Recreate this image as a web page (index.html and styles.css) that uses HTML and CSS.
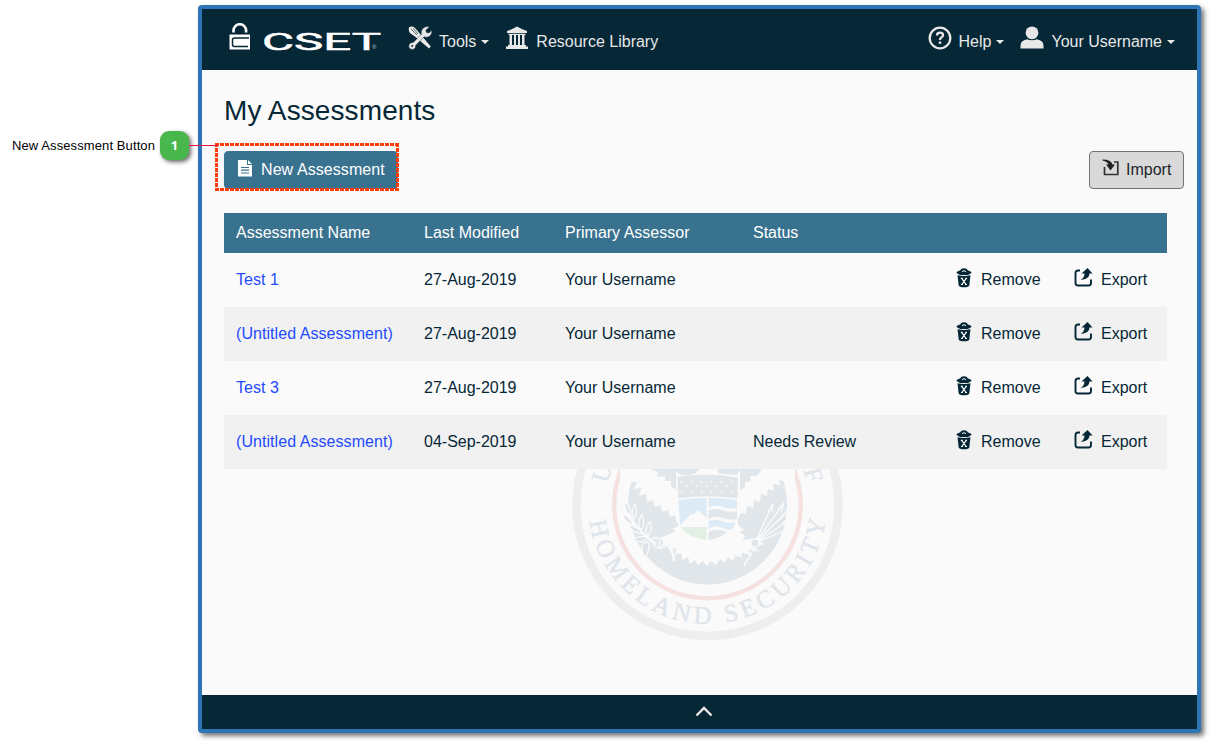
FILE: index.html
```html
<!DOCTYPE html>
<html lang="en">
<head>
<meta charset="utf-8">
<title>CSET - My Assessments</title>
<link rel="stylesheet" href="styles.css">
</head>
<body>
<svg class="defs" width="0" height="0" aria-hidden="true">
  <symbol id="trash" viewBox="0 0 16 20">
    <path d="M.5 5Q.5 3.200 4 2.500Q5 .3 8 .3T12 2.500Q15.500 3.200 15.500 5L12 7H4Z" fill="#052736"/>
    <path d="M6 3.600Q8 1.800 10 3.600" fill="none" stroke="#fafafa" stroke-width="1"/>
    <path d="M1.500 7.200Q8 8.800 14.500 7.200L13.300 17.500Q12.900 19.300 8 19.300T2.700 17.500Z" fill="#052736"/>
    <path d="M5.700 10.300L10 16.500M10.300 10.300L5.700 16.500M4.800 10.300H6.800M9.300 10.300H11M5 16.500H6.800M9 16.500H11" fill="none" stroke="#fff" stroke-width="1.200"/>
  </symbol>
  <symbol id="export" viewBox="0 0 19 19">
    <path d="M6 2.500H4Q1.500 2.500 1.500 5V15Q1.500 17.500 4 17.500H14.500Q17 17.500 17 15V11.500" fill="none" stroke="#052736" stroke-width="1.900"/>
    <path d="M13.500 0L18.500 5.500H15.500Q15.500 11 6.500 12Q10.500 9.500 10.500 5.500H7.500Z" fill="#052736"/>
  </symbol>
</svg>
<main class="page">
  <aside class="callout"><span>New Assessment Button</span><b class="badge">1</b><i class="lead"></i></aside>
  <section class="window">
    <header class="navbar">
      <svg class="lock" width="22" height="28" viewBox="0 0 22 28">
        <path d="M4.500 9.500V7.500A6.300 6.300 0 0 1 17.100 7.500V9.500" fill="none" stroke="#fff" stroke-width="2.600"/>
        <path d="M.5 11.500H21V26.500H.5Z" fill="#fff"/>
        <path d="M20 15H5.500Q3.500 15 3.500 17V21.500Q3.500 23.500 5.500 23.500H19" fill="none" stroke="#052736" stroke-width="1.500"/>
      </svg>
      <svg class="wordmark" width="120" height="30" viewBox="0 0 120 30">
        <text x="-1" y="19" class="wm" textLength="119" lengthAdjust="spacingAndGlyphs">CSET</text>
        <text x="109" y="18" class="reg">®</text>
      </svg>
      <a class="nav tools">
        <svg width="24" height="24" viewBox="0 0 24 24">
          <path d="M1 1.500Q4-.5 7 2L10.500 6 22.800 20.500 21 22.500 7.500 11 2.500 7.500Q0 5 1 1.500Z" fill="#e8e8e8"/>
          <path d="M3 3L9 9M5 2L10 8" stroke="#052736" stroke-width=".6"/>
          <path d="M21.500 .8L17.800 4.200 18.500 6.500 21 7 23.500 4.300Q24.500 9 20.500 10.700 18 11.700 16 10.800L7.500 19.500Q8.200 22 5.500 23.200 2.500 24 1 21.500 0 18.300 3 16.800 4 16.400 5 16.700L13.500 8.200Q12.500 5 15 2.300 18-.3 21.500 .8Z" fill="#e8e8e8" stroke="#052736" stroke-width=".4"/>
          <circle cx="4.200" cy="20" r=".9" fill="#052736"/>
        </svg><span>Tools</span><i class="caret"></i></a>
      <a class="nav library">
        <svg width="24" height="24" viewBox="0 0 24 24" fill="#e8e8e8"><path d="M12 .5Q17 3.500 22 5V7H2V5Q7 3.500 12 .5ZM3.500 7.800H20.500V9H3.500ZM4.500 9H7V19H4.500ZM9 9H11V19H9ZM13 9H15V19H13ZM17 9H19.500V19H17ZM3 19H21V20.500H3ZM1 20.500H23V23H1Z"/></svg><span>Resource Library</span></a>
      <a class="nav help">
        <svg width="24" height="24" viewBox="0 0 24 24" fill="none" stroke="#e8e8e8"><circle cx="12" cy="12" r="10.300" stroke-width="2.300"/><path d="M9 9.500Q9 6.700 12 6.700T15 9.200Q15 10.600 13.300 11.500Q12 12.300 12 14" stroke-width="2.300"/><path d="M12 15.500V17.800" stroke-width="2.500"/></svg><span>Help</span><i class="caret"></i></a>
      <a class="nav user">
        <svg width="24" height="24" viewBox="0 0 24 24" fill="#e8e8e8"><circle cx="12" cy="6.800" r="6.400"/><path d="M.5 22.500V19.500Q.5 14.500 7 13.200Q12 15.500 17 13.200Q23.500 14.500 23.500 19.500V22.500Z"/></svg><span>Your Username</span><i class="caret"></i></a>
    </header>
    <div class="content">
      <svg class="seal" width="272" height="272" viewBox="572 369 272 272">
        <defs>
          <path id="arcBottom" d="M589.700 521.600A119 119 0 0 0 825.300 521.600"/>
          <pattern id="stars" width="10" height="10" patternUnits="userSpaceOnUse" patternTransform="translate(679 479)"><circle cx="2.500" cy="2.500" r="1" fill="#fafafa"/><circle cx="7.500" cy="7" r="1" fill="#fafafa"/></pattern>
        </defs>
        <circle cx="707.500" cy="505" r="131" fill="none" stroke="#eee" stroke-width="8.500"/>
        <circle cx="707.500" cy="505" r="93.300" fill="none" stroke="#f6e1e1" stroke-width="4.300"/>
        <text class="sealtext" text-anchor="middle" transform="translate(610 475) rotate(-73)">U</text>
        <text class="sealtext" text-anchor="middle" transform="translate(805.500 477) rotate(74)">F</text>
        <text class="sealtext"><textPath href="#arcBottom" textLength="341">HOMELAND SECURITY</textPath></text>
        <circle cx="707.500" cy="505" r="79.500" fill="#e1e6ea"/>
        <path fill="#fafafa" d="M620 440H795V480L784 481 779 480 780 486 773 483 774 491 768 489 767 496 761 494 760 502 754 500 753 508 747 506 746 514 741 513 738 519 738 525 744 530 739 532 746 536 742 540 749 539 758 539 764 544 755 547 760 552 748 549 752 556 741 552 742 558 735 554 733 561 728 557 725 563 720 559 716 565 711 561 707 566 703 561 698 565 695 560 690 564 688 557 682 560 681 553 675 555 676 548 669 551 670 544 662 546 664 540 660 538 667 535 676 531 672 529 679 526 676 520 675 515 670 517 668 510 662 512 661 505 655 507 653 500 647 502 646 494 639 496 641 488 634 489 637 482 630 482 620 482Z"/>
        <path fill="#e1e6ea" d="M650 469L676 469V490L671 486V481L665 481V476L657 477 658 472ZM740 469H762L757 476 750 476 751 481 745 482V487L740 490Z"/>
        <path fill="#e1e6ea" d="M671 468H700L696 473 689 475Q679 476 676 471ZM718 468H741L737 475Q723 474 718 473Z"/>
        <path fill="#e1e6ea" d="M677.500 477Q708 472 738 477.500L737.500 498.500Q708 494 678 498.500Z"/>
        <path fill="url(#stars)" d="M679 479Q708 475 736 479V495Q708 492 679 495Z"/>
        <path fill="#dcebf5" d="M678.500 500Q692 498 706.500 498V518L698 510 694 514 691 514 680 525Z"/>
        <path fill="#e1efe4" d="M680 527H706.500V540Q689 538 680 527Z"/>
        <path fill="#dcebf5" d="M708.500 498Q724 498 737 500V508Q730 510 723 507T708.500 508Z"/>
        <path fill="#e1e6ea" d="M708.500 510Q716 508 723 510.500T737 511V519Q730 521 723 518T708.500 519Z"/>
        <path fill="#dcebf5" d="M708.500 521Q716 519 723 521.500T736 522Q734 527 731 530Q726 529 720 527T708.500 529Z"/>
        <path fill="#e1e6ea" d="M708.500 532Q716 528 727 532Q720 538 708.500 540Z"/>
        <g fill="none" stroke="#fafafa" stroke-width="1.300">
          <path d="M626 505Q631 527 656 544M664 541Q674 550 674 561" stroke-width="2.500"/>
          <path d="M625 502Q624 510 630 516Q632 508 625 502ZM635 504Q630 511 634 519Q638 512 635 504ZM622 514Q625 523 634 525Q630 516 622 514ZM628 526Q634 534 642 533Q637 525 628 526ZM642 515Q636 523 641 530Q646 523 642 515ZM650 522Q643 529 648 536Q653 530 650 522ZM633 540Q642 544 648 538Q641 534 633 540ZM643 543Q640 552 645 557Q651 549 648 542Z" fill="#dee4e9"/>
          <path d="M653 538Q650 545 658 548Q665 546 664 540Q658 537 653 538M660 540Q656 553 668 545"/>
          <path d="M755 543L772 505M755 543L781 507M755 543L785 514M755 543L788 521M755 543L788 529M753 546L731 559M755 547L744 566M751 545L730 554"/>
          <path d="M768 512L773 504 772 512M778 510L784 503 781 512M781 517L791 507 786 516M782 524L794 513 787 525M781 533L793 524 785 534M730 553L743 549M744 565L752 553"/>
          <circle cx="755" cy="543" r="4" fill="#e1e6ea"/>
        </g>
      </svg>
      <h1>My Assessments</h1>
      <div class="actions">
        <button class="btn primary"><svg width="14" height="17" viewBox="0 0 14 17"><path d="M0 0H9V5H14V16.500H0ZM10 0L14 4H10Z" fill="#fff"/><path d="M3 7.500H11M3 10.200H11M3 13H11" stroke="#39728f" stroke-width="1.200"/></svg><span>New Assessment</span><i class="highlight"></i></button>
        <button class="btn import"><svg width="18" height="17" viewBox="0 0 18 17"><path d="M2.500 8V15.500H15.800V3H12" fill="none" stroke="#333" stroke-width="1.700"/><path d="M.5 .5Q9 .5 10.500 5.500H13L8.500 11.500 4 5.500H6.500Q5.500 2.500 .5 1.500Z" fill="#222"/></svg><span>Import</span></button>
      </div>
      <div class="table">
        <div class="row head"><span>Assessment Name</span><span>Last Modified</span><span>Primary Assessor</span><span>Status</span></div>
        <div class="row"><a>Test 1</a><span>27-Aug-2019</span><span>Your Username</span><span></span><span class="act"><svg class="trash"><use href="#trash"/></svg>Remove</span><span class="act"><svg class="export"><use href="#export"/></svg>Export</span></div>
        <div class="row alt"><a>(Untitled Assessment)</a><span>27-Aug-2019</span><span>Your Username</span><span></span><span class="act"><svg class="trash"><use href="#trash"/></svg>Remove</span><span class="act"><svg class="export"><use href="#export"/></svg>Export</span></div>
        <div class="row"><a>Test 3</a><span>27-Aug-2019</span><span>Your Username</span><span></span><span class="act"><svg class="trash"><use href="#trash"/></svg>Remove</span><span class="act"><svg class="export"><use href="#export"/></svg>Export</span></div>
        <div class="row alt"><a>(Untitled Assessment)</a><span>04-Sep-2019</span><span>Your Username</span><span>Needs Review</span><span class="act"><svg class="trash"><use href="#trash"/></svg>Remove</span><span class="act"><svg class="export"><use href="#export"/></svg>Export</span></div>
      </div>
    </div>
    <footer class="footer"><svg width="18" height="11" viewBox="0 0 18 11"><path d="M1.500 9.500L9 2L16.500 9.500" fill="none" stroke="#f0ede8" stroke-width="2.400"/></svg></footer>
  </section>
</main>
</body>
</html>
```

FILE: styles.css
```css
* { box-sizing: border-box; }
body { margin: 0; background: #fff; font: 16px/24px "Liberation Sans", Arial, sans-serif; color: #052736; }
.defs { position: absolute; }
.page { display: flex; height: 742px; overflow: hidden; }
.callout { display: flex; align-items: flex-start; justify-content: flex-end; position: relative; width: 198px; height: 30px; margin-top: 131px; padding-right: 9px; font-size: 13px; line-height: 29px; letter-spacing: .1px; color: #000; gap: 5px; white-space: nowrap; }
.badge { width: 29px; height: 29px; border-radius: 9px; background: #48b84c; color: #fff; font: bold 13px/29px "Open Sans", sans-serif; text-align: center; box-shadow: 2px 2px 4px rgba(0,0,0,.6); }
.lead { position: absolute; z-index: 2; left: 189px; top: 14px; width: 29px; height: 1px; background: #f0103c; }
.window { display: flex; flex-direction: column; width: 1003px; height: 728px; margin-top: 5px; border: 4px solid #2e75b6; border-radius: 4px; background: #fafafa; box-shadow: 3px 3px 5px rgba(0,0,0,.55); }
.navbar { display: flex; align-items: flex-start; height: 61px; padding: 14px 22px 0 27px; background: #052736; color: #e8e8e8; }
.wordmark { margin: 8px 0 0 12px; overflow: visible; }
.wm { font: 23px Roboto, sans-serif; fill: #fff; stroke: #fff; stroke-width: .5; }
.reg { font: 6px "Liberation Sans", sans-serif; fill: #ccc; }
.nav { display: flex; align-items: flex-start; white-space: nowrap; }
.nav svg { margin-top: 3px; }
.nav span { margin: 7px 0 0 7px; }
.caret { margin: 17px 0 0 5px; border: 4px solid transparent; border-top-color: #e8e8e8; border-bottom: 0; }
.tools { margin-left: 25px; }
.library { margin-left: 16px; }
.help { margin-left: auto; }
.user { margin-left: 16px; }
.content { position: relative; flex: 1; padding: 24px 13px 0 22px; }
.seal { position: absolute; left: 370px; top: 299px; }
.sealtext { font: 25px "Liberation Serif", serif; fill: #dfe5ea; stroke: #dfe5ea; stroke-width: .4; }
h1 { margin: 0; font-size: 28px; font-weight: 400; line-height: 34px; letter-spacing: .1px; }
.actions { display: flex; justify-content: space-between; margin-top: 23px; }
.btn { display: flex; position: relative; height: 38px; padding: 6px 12px; border: 1px solid #39728f; border-radius: 4px; font: 16px/24px "Liberation Sans", Arial, sans-serif; white-space: nowrap; }
.primary { width: 174px; background: #39728f; color: #fff; padding-left: 13px; letter-spacing: .08px; }
.primary svg { margin: 2px 9px 0 0; flex: none; }
.import { width: 95px; background: #d9d9d9; border-color: #6c757d; color: #212529; }
.import svg { margin: 1px 6px 0 0; flex: none; }
.highlight { position: absolute; left: -10px; top: -9px; width: 184px; height: 48px; background: repeating-linear-gradient(90deg, #ff3c0a 0 4px, transparent 4px 5px) 0 0/100% 3px no-repeat, repeating-linear-gradient(90deg, #ff3c0a 0 4px, transparent 4px 5px) 0 100%/100% 3px no-repeat, repeating-linear-gradient(#ff3c0a 0 4px, transparent 4px 5px) 0 0/3px 100% no-repeat, repeating-linear-gradient(#ff3c0a 0 4px, transparent 4px 5px) 100% 0/3px 100% no-repeat; }
.table { position: relative; width: 943px; margin-top: 24px; }
.row { display: grid; grid-template-columns: 188px 141px 188px 202px 119px 1fr; align-items: center; height: 54px; padding-left: 12px; padding-bottom: 1px; background: #fafafa; white-space: nowrap; }
.row.alt { background: #f1f1f1; }
.row.head { height: 40px; background: #39728f; color: #fff; }
.row a { color: #1f4bff; letter-spacing: .06px; }
.act { display: flex; }
.trash { width: 16px; height: 20px; margin: 0 9px 0 1px; }
.export { width: 19px; height: 19px; margin: 0 8px 0 0; }
.footer { display: flex; justify-content: center; height: 34px; padding: 11px 0 0 9px; background: #052736; }
```
